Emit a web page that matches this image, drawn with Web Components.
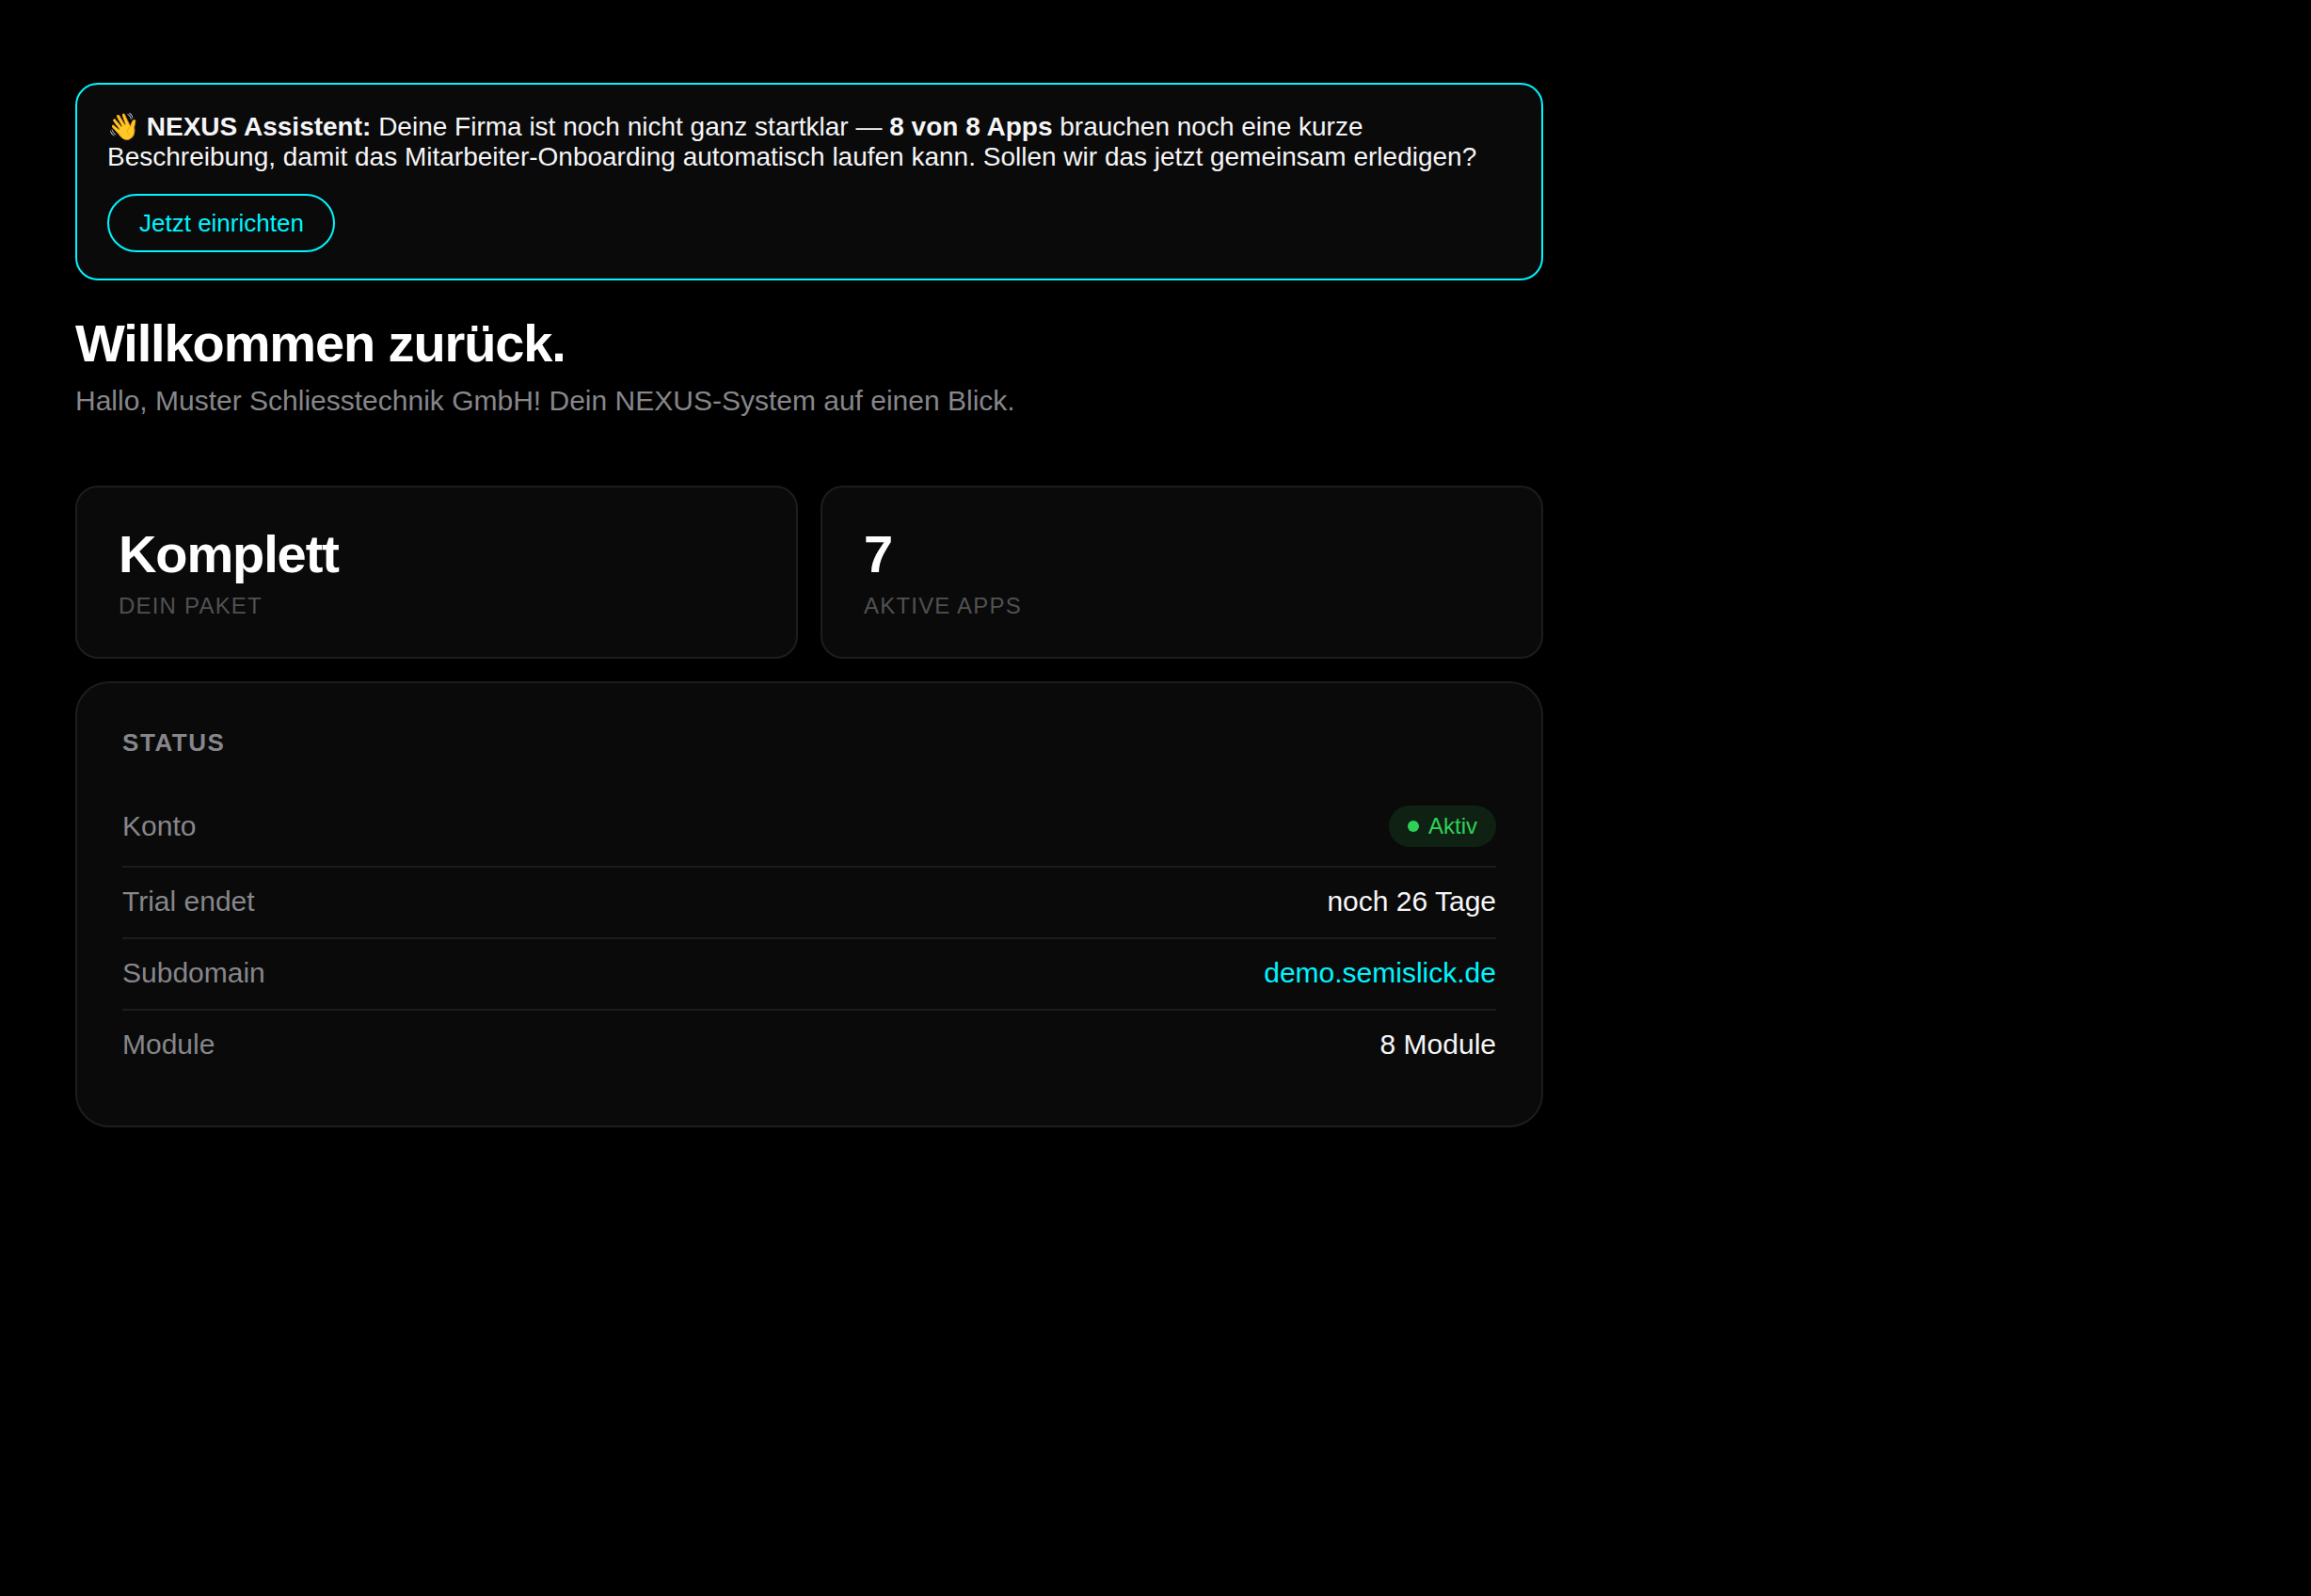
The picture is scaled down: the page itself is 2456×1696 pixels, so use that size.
<!DOCTYPE html>
<html lang="de">
<head>
  <meta charset="UTF-8">
  <title>NEXUS Dashboard</title>
  <style>
    :root {
      --bg: #000;
      --card: #0a0a0a;
      --line: #1d1d1f;
      --text: #f5f5f7;
      --muted: #86868b;
      --label: #515154;
      --accent: #00f5ff;
      --green: #30d158;
    }
    body {
      margin: 0;
      background: var(--bg);
      color: var(--text);
      font-family: "Liberation Sans", Arial, sans-serif;
      font-size: 30px;
    }
    .wave {
      margin-right: -1px;
    }
  </style>
</head>
<body>
  <nexus-dashboard>
    <nexus-assistant action="Jetzt einrichten"><span class="wave">👋</span> <strong>NEXUS Assistent:</strong> Deine Firma ist noch nicht ganz startklar — <strong>8 von 8 Apps</strong> brauchen noch eine kurze Beschreibung, damit das Mitarbeiter-Onboarding automatisch laufen kann. Sollen wir das jetzt gemeinsam erledigen?</nexus-assistant>
    <page-header>
      <span slot="title">Willkommen zurück.</span>
      Hallo, Muster Schliesstechnik GmbH! Dein NEXUS-System auf einen Blick.
    </page-header>
    <stat-grid>
      <stat-card label="Dein Paket">Komplett</stat-card>
      <stat-card label="Aktive Apps">7</stat-card>
    </stat-grid>
    <status-card heading="Status">
      <status-row label="Konto"><status-badge>Aktiv</status-badge></status-row>
      <status-row label="Trial endet">noch 26 Tage</status-row>
      <status-row label="Subdomain" link>demo.semislick.de</status-row>
      <status-row label="Module">8 Module</status-row>
    </status-card>
  </nexus-dashboard>

  <script>
    class BaseElement extends HTMLElement {
      constructor() {
        super();
        this.attachShadow({ mode: "open" });
      }

      connectedCallback() {
        const template = document.createElement("template");
        template.innerHTML = this.render();
        this.shadowRoot.replaceChildren(template.content.cloneNode(true));
      }
    }

    class NexusDashboard extends BaseElement {
      render() {
        return `
          <style>
          :host {
            display: block;
            box-sizing: border-box;
            width: 1720px;
            padding: 88px 80px;
          }
          </style>
          <slot></slot>
        `;
      }
    }

    class NexusAssistant extends BaseElement {
      render() {
        return `
          <style>
          :host {
            display: block;
            padding: 29px 32px 28px;
            background: var(--card);
            border: 2px solid var(--accent);
            border-radius: 24px;
          }
          .text {
            font-size: 28px;
            line-height: 32px;
          }
          button {
            display: block;
            box-sizing: border-box;
            width: 242px;
            margin-top: 23px;
            padding: 14px 0 14px 32px;
            text-align: left;
            white-space: nowrap;
            background: transparent;
            color: var(--accent);
            border: 2px solid var(--accent);
            border-radius: 40px;
            font: 26px/30px "Liberation Sans", Arial, sans-serif;
          }
          </style>
          <div class="text"><slot></slot></div>
          <button>${this.getAttribute("action")}</button>
        `;
      }
    }

    class PageHeader extends BaseElement {
      render() {
        return `
          <style>
          :host {
            display: block;
            margin: 33px 0 73px;
          }
          h1 {
            margin: 0 0 10px;
            font-size: 56px;
            line-height: 68px;
            font-weight: 700;
            letter-spacing: -0.02em;
            color: #fff;
          }
          p {
            margin: 0;
            line-height: 34px;
            color: var(--muted);
          }
          </style>
          <h1><slot name="title"></slot></h1>
          <p><slot></slot></p>
        `;
      }
    }

    class StatGrid extends BaseElement {
      render() {
        return `
          <style>
          :host {
            display: grid;
            grid-template-columns: 1fr 1fr;
            gap: 24px;
            margin-bottom: 24px;
          }
          </style>
          <slot></slot>
        `;
      }
    }

    class StatCard extends BaseElement {
      render() {
        return `
          <style>
          :host {
            display: block;
            box-sizing: border-box;
            height: 184px;
            padding: 43px 44px;
            background: var(--card);
            border: 2px solid var(--line);
            border-radius: 24px;
          }
          .value {
            font-size: 56px;
            line-height: 56px;
            font-weight: 700;
            letter-spacing: -0.02em;
            color: #fff;
          }
          .label {
            margin-top: 13px;
            font-size: 24px;
            line-height: 28px;
            letter-spacing: 0.05em;
            text-transform: uppercase;
            color: var(--label);
          }
          </style>
          <div class="value"><slot></slot></div>
          <div class="label">${this.getAttribute("label")}</div>
        `;
      }
    }

    class StatusCard extends BaseElement {
      render() {
        return `
          <style>
          :host {
            display: block;
            padding: 48px;
            background: var(--card);
            border: 2px solid var(--line);
            border-radius: 36px;
          }
          h2 {
            margin: 0 0 32px;
            font-size: 26px;
            line-height: 30px;
            font-weight: 700;
            letter-spacing: 0.06em;
            text-transform: uppercase;
            color: var(--muted);
          }
          </style>
          <h2>${this.getAttribute("heading")}</h2>
          <slot></slot>
        `;
      }
    }

    class StatusRow extends BaseElement {
      render() {
        return `
          <style>
          :host {
            display: flex;
            justify-content: space-between;
            align-items: center;
            padding: 19px 0 21px;
            line-height: 34px;
            border-bottom: 2px solid var(--line);
          }
          :host(:first-child) {
            padding: 20px 0;
          }
          :host(:last-child) {
            border-bottom: none;
          }
          .label {
            color: var(--muted);
          }
          :host([link]) .value {
            color: var(--accent);
          }
          </style>
          <span class="label">${this.getAttribute("label")}</span>
          <span class="value"><slot></slot></span>
        `;
      }
    }

    class StatusBadge extends BaseElement {
      render() {
        return `
          <style>
          :host {
            display: flex;
            align-items: center;
            gap: 10px;
            padding: 8px 20px;
            font-size: 24px;
            line-height: 28px;
            color: var(--green);
            background: rgba(48, 209, 88, 0.12);
            border-radius: 40px;
          }
          .dot {
            width: 12px;
            height: 12px;
            border-radius: 50%;
            background: var(--green);
          }
          </style>
          <span class="dot"></span>
          <slot></slot>
        `;
      }
    }

    customElements.define("nexus-dashboard", NexusDashboard);
    customElements.define("nexus-assistant", NexusAssistant);
    customElements.define("page-header", PageHeader);
    customElements.define("stat-grid", StatGrid);
    customElements.define("stat-card", StatCard);
    customElements.define("status-card", StatusCard);
    customElements.define("status-row", StatusRow);
    customElements.define("status-badge", StatusBadge);
  </script>
</body>
</html>
